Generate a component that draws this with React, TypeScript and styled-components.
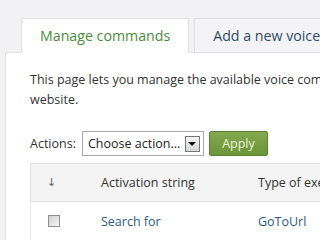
import styled, { createGlobalStyle } from 'styled-components';

const GlobalStyle = createGlobalStyle`
  html, body {
    margin: 0;
    padding: 0;
    background: #f2f2f4;
    overflow: hidden;
  }
  body {
    font-family: "Open Sans", "Noto Sans", sans-serif;
    color: #333;
  }
`;

const Page = styled.div`
  width: 320px;
  height: 240px;
  padding: 18px 0 0 5px;
  box-sizing: border-box;
  overflow: hidden;
`;

const Tabs = styled.div`
  display: flex;
  gap: 5px;
  padding-left: 16px;
  white-space: nowrap;
  position: relative;
  z-index: 1;
`;

const Tab = styled.div<{ $active?: boolean }>`
  flex: none;
  height: 35px;
  padding: 0 18px;
  display: flex;
  align-items: center;
  font-size: 14.2px;
  box-sizing: border-box;
  border: 1px solid #e0e0e2;
  border-bottom-color: ${(p) => (p.$active ? '#fff' : '#e0e0e2')};
  background: ${(p) => (p.$active ? '#fff' : '#f4f4f6')};
  color: ${(p) => (p.$active ? '#4b8c3c' : '#2e4b6a')};
`;

const Panel = styled.div`
  margin-top: -1px;
  background: #fff;
  border: 1px solid #e0e0e2;
  border-right: none;
  padding: 17px 0 0 24px;
  height: 300px;
  white-space: nowrap;
`;

const Intro = styled.p`
  margin: 0;
  font-size: 12.5px;
  line-height: 20px;
`;

const Actions = styled.div`
  display: flex;
  align-items: center;
  margin-top: 21px;
  font-size: 12.5px;
`;

const Select = styled.div`
  margin-left: 6px;
  width: 122px;
  height: 25px;
  box-sizing: border-box;
  border: 1px solid #a9a9a9;
  display: flex;
  align-items: center;
  justify-content: space-between;
  padding: 0 3px 0 5px;
  color: #222;
`;

const SelectArrow = styled.span`
  width: 15px;
  height: 16px;
  box-sizing: border-box;
  border: 1px solid #777;
  background: linear-gradient(#f4f4f4, #d8d8d8);
  display: flex;
  align-items: center;
  justify-content: center;

  &::after {
    content: '';
    border-left: 4px solid transparent;
    border-right: 4px solid transparent;
    border-top: 4px solid #111;
  }
`;

const ApplyButton = styled.div`
  margin-left: 5px;
  width: 59px;
  height: 25px;
  box-sizing: border-box;
  border: 1px solid #5b7e34;
  border-radius: 2px;
  background: linear-gradient(#82a94e, #6c9439);
  color: #e9f3dc;
  display: flex;
  align-items: center;
  justify-content: center;
`;

const Table = styled.div`
  margin-top: 7px;
  border-left: 1px solid #e3e3e3;
  border-top: 1px solid #e3e3e3;
  font-size: 12.5px;
`;

const Row = styled.div<{ $head?: boolean }>`
  display: grid;
  grid-template-columns: 70px 157px 1fr;
  align-items: center;
  height: ${(p) => (p.$head ? 37 : 38)}px;
  background: ${(p) => (p.$head ? '#f4f4f4' : '#fff')};
  border-bottom: 1px solid #e3e3e3;
  color: ${(p) => (p.$head ? '#333' : '#2b5b84')};
`;

const SortCell = styled.span`
  padding-left: 16px;
  color: #666;
  font-family: "DejaVu Sans", sans-serif;
  font-size: 11px;
`;

const CheckCell = styled.span`
  padding-left: 17px;
  display: flex;
`;

const CheckBox = styled.span`
  width: 12px;
  height: 12px;
  box-sizing: border-box;
  border: 1px solid #8f8f8f;
  background: linear-gradient(135deg, #cfcfcf, #f6f6f6);
`;

export default function App() {
  return (
    <Page>
      <GlobalStyle />
      <Tabs>
        <Tab $active>Manage commands</Tab>
        <Tab>Add a new voice command</Tab>
      </Tabs>
      <Panel>
        <Intro>
          This page lets you manage the available voice commands for this
          <br />
          website.
        </Intro>
        <Actions>
          Actions:
          <Select>
            Choose action...
            <SelectArrow />
          </Select>
          <ApplyButton>Apply</ApplyButton>
        </Actions>
        <Table>
          <Row $head>
            <SortCell>↓</SortCell>
            <span>Activation string</span>
            <span>Type of execution</span>
          </Row>
          <Row>
            <CheckCell>
              <CheckBox />
            </CheckCell>
            <span>Search for</span>
            <span>GoToUrl</span>
          </Row>
        </Table>
      </Panel>
    </Page>
  );
}
